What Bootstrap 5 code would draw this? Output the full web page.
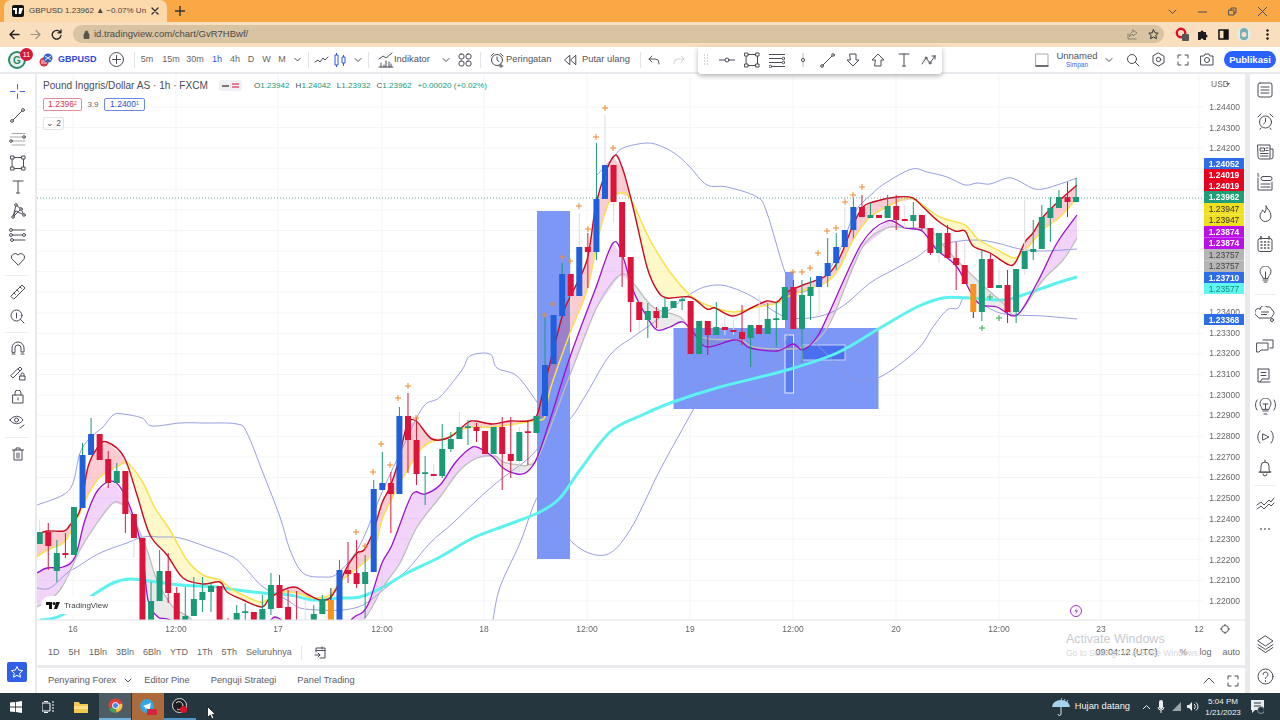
<!DOCTYPE html>
<html lang="en">
<head>
<meta charset="UTF-8">
<title>GBPUSD 1.23962</title>
<link href="https://cdn.jsdelivr.net/npm/bootstrap@5.3.0/dist/css/bootstrap.min.css" rel="stylesheet">
<style>
html,body{height:720px;overflow:hidden}
body{font-family:"Liberation Sans",Arial,sans-serif;font-size:10px;color:#4a4a4a;background:#fff}
svg{display:block;flex:none}
.ico{fill:none;stroke:#4a4d56;stroke-width:1;stroke-linecap:round;stroke-linejoin:round}
/* browser */
.tabstrip{height:22px;background:#f9a845;flex:none}
.btab{width:163px;height:22px;margin-left:4px;background:#fbd9ab;border-radius:7px 7px 0 0;padding:0 8px;font-size:8px;color:#444;gap:5px}
.btab-title{width:120px;white-space:nowrap;overflow:hidden}
.fav{width:12px;height:12px;background:#111;border-radius:2px;flex:none}
.winbtns{margin-left:auto;gap:21px;padding-right:13px}
.addrbar{height:25px;background:#f9dfbd;padding:0 0 1px 0;flex:none}
.omni{width:1091px;height:18px;background:#d8c3a3;border-radius:9px;padding:0 5px 0 10px;font-size:9.5px;color:#4c4a45;margin-left:6px;flex:none}
.nav-ico{width:21px}
.ext{width:20.5px;flex:none}
/* tv toolbar */
.tvbar{height:27px;background:#fff;flex:none;border-bottom:2px solid #e9eaee;font-size:9.4px;color:#50535e;white-space:nowrap}
.avatar{width:34px;height:25px}
.bdg{top:1px;left:20px;width:13px;height:13px;border-radius:50%;background:#d9173a;color:#fff;font-size:7px;line-height:13px;text-align:center}
.tick{color:#2b48d8;font-weight:700;font-size:9px;width:36px}
.vsep{width:1px;height:16px;background:#e4e5ea;flex:none}
.iv{text-align:center;font-size:9px;color:#666;flex:none}
.on{color:#2b58e8}
.w15{width:15px}.w16{width:16px}.w20{width:20px}.w24{width:24px}.w38{width:38px}.w46{width:46px}.w48{width:48px}
.m1{margin-left:1px}.m2{margin-left:2px}.m3{margin-left:3px}.m4{margin-left:4px}.m5{margin-left:5px}.m6{margin-left:6px}.m7{margin-left:7px}.m8{margin-left:8px}.m9{margin-left:9px}.m10{margin-left:10px}.m11{margin-left:11px}.m12{margin-left:12px}.m15{margin-left:15px}
.drawbar{width:244px;height:27px;background:#fff;box-shadow:0 2px 5px rgba(0,0,0,.3);border-radius:0 0 3px 3px;padding:0 0 0 5px;z-index:3;margin-top:1px;flex:none}
.dcell{width:25.3px;flex:none}
.layoutname{width:44px;line-height:1;text-align:center;color:#50535e;font-size:9.5px}
.layoutname small{display:block;font-size:6.5px;color:#2f6ce8;margin-top:1px}
.rightgrp{margin-left:auto;padding-right:4px}
.pub{width:52px;height:17px;background:#2962ff;border-radius:9px;color:#fff;font-weight:700;font-size:9.5px;line-height:17px;text-align:center}
/* main */
.mainrow{height:619px;flex:none}
.ltools{width:37px;border-right:2px solid #e9eaee;padding-top:5px;flex:none}
.lcell{width:35px;height:24px}
.lsep{width:24px;height:1px;background:#eceef2;margin:4px 5px}
.star{width:20px;height:20px;background:#2f5fe8;margin:auto 0 11px 7px;border-radius:2px}
.center{width:1208px;flex:none}
.chartbox{height:566px}
#chart{filter:blur(.3px)}
.legend{top:4px;left:6px;color:#50535e;z-index:2}
.leg-title{font-size:10.1px;width:170px;color:#4a4d58;white-space:nowrap}
.leg-mini{width:23px;height:11px;background:#eef0f3;border-radius:3px;margin-left:6px;gap:3px}
.ohlc{margin-left:12px;font-size:8.1px;gap:6px;color:#1b9a77;white-space:nowrap}
.ohlc b{font-weight:400;color:#555}
.legrow2{margin-top:5px}
.legrow3{margin-top:6px}
.pill{height:13px;border-radius:2px;font-size:8.5px;line-height:11px;text-align:center;white-space:nowrap}
.p-red{width:39px;border:1px solid #e58b98;color:#d5384d}
.p-blue{width:41px;border:1px solid #6f86ea;color:#2c52d8}
.p-n{width:21px;border:1px solid #e2e3e8;color:#555}
.spr{width:22px;text-align:center;font-size:8px;color:#666}
.rangebar{height:25px;font-size:9px;color:#666;padding:0 5px 0 11px;gap:9px;white-space:nowrap}
.watermark{left:1029px;top:-7px;color:#c9cbd1;z-index:2;pointer-events:none;line-height:1;white-space:nowrap}
.wm1{font-size:12.5px}
.wm2{font-size:8.5px;margin-top:3px;color:#d6d8dc}
.rsep{width:1px;height:14px;background:#e4e5ea}
.utc{color:#555;margin-right:13px}
.hsep{height:3px;background:#e9eaee}
.bottabs{height:25px;padding:0 6px 0 11px;font-size:9.3px;color:#5a5d68;gap:21px;white-space:nowrap}
.tab0{margin-right:-9px}
.tabfull{margin-left:-9px}
.rtools{width:35px;border-left:5px solid #e9eaee;flex:none;padding-top:1px}
.rcell{height:30.7px}
.rcell-s{height:20px}
.rsepx{width:22px;height:1px;background:#eceef2;margin:2px 4px}
.rbot{margin-top:auto}
.rbot .rcell{height:33px}
/* taskbar */
.taskbar{height:27px;background:#25363e;color:#f0f2f3;flex:none;font-size:9.3px}
.tcell{width:32px;height:27px;flex:none}
.t-act{background:#4e5c63;border-bottom:2px solid #6fb4e0}
.t-flash{background:#ad6a3a}
.t-un{border-bottom:2px solid #4f95c5}
.clock{font-size:8px;line-height:11px;text-align:center;width:46px}
.cursor{left:207px;top:13px}
</style>
</head>
<body class="d-flex flex-column">

<div class="tabstrip d-flex align-items-center">
  <div class="btab d-flex align-items-center">
    <span class="fav d-flex align-items-center justify-content-center">
      <svg width="10" height="6" viewBox="0 0 10 6"><path d="M0 0h4v6H2V2H0zM6 0h4L8 6H5.600z" fill="#fff"/></svg>
    </span>
    <span class="btab-title">GBPUSD 1.23962 ▲ −0.07% Unr</span>
    <svg class="ico" width="8" height="8" viewBox="0 0 8 8"><path d="M1 1l6 6M7 1L1 7" stroke="#333" stroke-width="1.400"/></svg>
  </div>
  <svg class="ico ms-2" width="10" height="10" viewBox="0 0 10 10"><path d="M5 0v10M0 5h10" stroke="#333" stroke-width="1.400"/></svg>
  <div class="winbtns d-flex align-items-center">
    <svg class="ico" width="9" height="9" viewBox="0 0 9 9"><path d="M1 3l3.500 3.500L8 3"/></svg>
    <svg class="ico" width="9" height="9" viewBox="0 0 9 9"><path d="M0 5h9"/></svg>
    <svg class="ico" width="9" height="9" viewBox="0 0 9 9"><path d="M1 3h5v5H1zM3 3V1h5v5H6"/></svg>
    <svg class="ico" width="9" height="9" viewBox="0 0 9 9"><path d="M0 0l9 9M9 0L0 9"/></svg>
  </div>
</div>

<div class="addrbar d-flex align-items-center">
  <span class="nav-ico d-flex justify-content-center ms-1"><svg class="ico" width="11" height="11" viewBox="0 0 11 11"><path d="M10 5.500H1M5 1.500l-4 4 4 4" stroke="#222" stroke-width="1.400"/></svg></span>
  <span class="nav-ico d-flex justify-content-center"><svg class="ico" width="11" height="11" viewBox="0 0 11 11"><path d="M1 5.500h9M6 1.500l4 4-4 4" stroke="#9b927f" stroke-width="1.200"/></svg></span>
  <span class="nav-ico d-flex justify-content-center"><svg class="ico" width="11" height="11" viewBox="0 0 11 11"><path d="M9.500 3.600A4.400 4.400 0 1 0 10 6.500M10 .8v3H7" stroke="#222" stroke-width="1.300"/></svg></span>
  <div class="omni d-flex align-items-center">
    <svg width="7" height="9" viewBox="0 0 7 9"><path d="M1 4h5v4.500H1zM2 4V2.400a1.500 1.500 0 0 1 3 0V4" fill="#5a5347" stroke="#5a5347" stroke-width=".8"/></svg>
    <span class="ms-1">id.tradingview.com/chart/GvR7HBwf/</span>
    <svg class="ico ms-auto" width="11" height="11" viewBox="0 0 11 11"><path d="M1 5v5h8M6 1l4 3-4 3V5.400C4 5.400 3 6.400 2.500 8 2.500 5 4 2.800 6 2.600z" stroke="#8a8272"/></svg>
    <svg class="ico m10" width="11" height="11" viewBox="0 0 11 11"><path d="M5.500.8l1.500 3 3.200.4-2.400 2.200.700 3.300-3-1.700-3 1.700.700-3.300L.8 4.200 4 3.800z" stroke="#333"/></svg>
  </div>
  <span class="ext d-flex justify-content-center ms-2"><svg width="14" height="14" viewBox="0 0 14 14"><circle cx="6" cy="6" r="4.200" fill="none" stroke="#e00d25" stroke-width="2.400"/><rect x="7" y="7" width="7" height="7" rx="1" fill="#555"/></svg></span>
  <span class="ext d-flex justify-content-center"><svg width="11" height="11" viewBox="0 0 11 11"><path d="M1 3h2.500a1.500 1.500 0 0 1 3 0H9v2.500a1.500 1.500 0 0 1 0 3V11H6.500a1.500 1.500 0 0 0-3 0H1z" fill="#1c1c1c"/></svg></span>
  <span class="ext d-flex justify-content-center"><svg width="11" height="11" viewBox="0 0 11 11"><path d="M1 1h9v9H1z" fill="none" stroke="#111" stroke-width="1.500"/><path d="M5.500 1H10v9H5.500z" fill="#111"/></svg></span>
  <span class="ext d-flex justify-content-center"><svg width="14" height="14" viewBox="0 0 14 14"><circle cx="7" cy="7" r="7" fill="#dfeee9"/><path d="M3 5a4 4 0 0 1 8 0v6l-2 2H5l-2-2z" fill="#79aeb5"/><circle cx="7" cy="7.500" r="2.500" fill="#f4dfd1"/></svg></span>
  <span class="ext d-flex justify-content-center m3"><svg width="3" height="11" viewBox="0 0 3 11"><circle cx="1.500" cy="1.500" r="1.200" fill="#111"/><circle cx="1.500" cy="5.500" r="1.200" fill="#111"/><circle cx="1.500" cy="9.500" r="1.200" fill="#111"/></svg></span>
</div>

<div class="tvbar d-flex align-items-center">
  <div class="avatar position-relative d-flex align-items-center justify-content-center">
    <svg width="18" height="18" viewBox="0 0 18 18"><circle cx="9" cy="9" r="8" fill="#e8f1ec" stroke="#2d8a68" stroke-width="2"/><text x="9" y="12.500" text-anchor="middle" font-size="10" font-weight="700" fill="#2d8a68" font-family="Liberation Sans">G</text></svg>
    <span class="bdg position-absolute">11</span>
  </div>
  <svg class="m5" width="14" height="14" viewBox="0 0 14 14"><circle cx="5" cy="9" r="4.500" fill="#d8394e"/><path d="M2 8h7M2 10h6" stroke="#fff" stroke-width=".8"/><circle cx="9" cy="5" r="4.500" fill="#3b62c9"/><path d="M6 3l6 4M12 3L6 7" stroke="#fff" stroke-width=".9"/></svg>
  <span class="tick m5">GBPUSD</span>
  <svg class="ico m15" width="15" height="15" viewBox="0 0 15 15"><circle cx="7.500" cy="7.500" r="7"/><path d="M7.500 3.500v8M3.500 7.500h8"/></svg>
  <span class="vsep m10"></span>
  <span class="iv w24">5m</span><span class="iv w24">15m</span><span class="iv w24">30m</span><span class="iv w20 on">1h</span><span class="iv w16">4h</span><span class="iv w16">D</span><span class="iv w15">W</span><span class="iv w16">M</span>
  <span class="w15 d-flex justify-content-center"><svg class="ico" width="7" height="5" viewBox="0 0 7 5"><path d="M.5 1l3 3 3-3"/></svg></span>
  <span class="vsep m3"></span>
  <svg class="ico m5" width="15" height="14" viewBox="0 0 15 14"><path d="M1 9l3-2 2 2 3-4 2 2 3-3"/></svg>
  <svg class="m4" width="14" height="16" viewBox="0 0 14 16" fill="none" stroke="#2b58e8"><path d="M2 3h3v10H2zM3.500 1v2M3.500 13v2M9 5h3v6H9zM10.500 3v2M10.500 11v3"/></svg>
  <svg class="ico m6" width="10" height="6" viewBox="0 0 10 6"><path d="M2 1.500l3 3 3-3"/></svg>
  <span class="vsep m5"></span>
  <svg class="ico m9" width="16" height="16" viewBox="0 0 16 16"><path d="M1 15h14M3 15v-4M8 15V9M13 15v-3M6 15v-2M11 15v-5M1 7l4-3 3 2 6-5"/></svg>
  <span class="w38">Indikator</span>
  <svg class="ico m9" width="10" height="6" viewBox="0 0 10 6"><path d="M2 1.500l3 3 3-3"/></svg>
  <svg class="ico m7" width="14" height="14" viewBox="0 0 14 14"><rect x="1" y="1" width="5" height="5" rx="2"/><rect x="8" y="1" width="5" height="5" rx="2"/><rect x="1" y="8" width="5" height="5" rx="2"/><rect x="8" y="8" width="5" height="5" rx="2"/></svg>
  <span class="vsep m8"></span>
  <svg class="ico m8" width="16" height="16" viewBox="0 0 16 16"><circle cx="8" cy="8" r="5.500"/><path d="M8 5v3l2 1.500M2 4l2.500-2.500M14 4l-2.500-2.500M12 12v3.500M10 14h4"/></svg>
  <span class="w46 m1">Peringatan</span>
  <svg class="ico m11" width="14" height="14" viewBox="0 0 14 14"><path d="M6.500 2.500L1.500 7l5 4.500zM12.500 2.500L7.500 7l5 4.500z"/></svg>
  <span class="w48 m5">Putar ulang</span>
  <span class="vsep m10"></span>
  <svg class="ico m6" width="14" height="12" viewBox="0 0 14 12"><path d="M5 2L2 5l3 3M2 5h6a4 4 0 0 1 4 4v1" stroke="#555"/></svg>
  <svg class="ico m11" width="14" height="12" viewBox="0 0 14 12"><path d="M9 2l3 3-3 3M12 5H6a4 4 0 0 0-4 4v1" stroke="#cfd1d6"/></svg>
  <div class="drawbar d-flex align-items-center m12">
    <svg width="6" height="12" viewBox="0 0 6 12"><path d="M1 1h1M4 1h1M1 4h1M4 4h1M1 7h1M4 7h1M1 10h1M4 10h1" stroke="#aaa"/></svg>
    <span class="dcell d-flex justify-content-center m5"><svg class="ico" width="16" height="6" viewBox="0 0 16 6"><path d="M0 3h6M10 3h6"/><circle cx="8" cy="3" r="2"/></svg></span>
    <span class="dcell d-flex justify-content-center"><svg class="ico" width="16" height="16" viewBox="0 0 16 16"><path d="M2.500 2.500h11v11h-11z"/><rect x="1" y="1" width="3" height="3" fill="#fff"/><rect x="12" y="1" width="3" height="3" fill="#fff"/><rect x="1" y="12" width="3" height="3" fill="#fff"/><rect x="12" y="12" width="3" height="3" fill="#fff"/></svg></span>
    <span class="dcell d-flex justify-content-center"><svg class="ico" width="16" height="15" viewBox="0 0 16 15"><path d="M0 1.500h16M0 5.500h13M0 9.500h13M3 13.500h13"/><circle cx="14.500" cy="5.500" r="1.300" fill="#fff"/><circle cx="14.500" cy="9.500" r="1.300" fill="#fff"/><circle cx="1.500" cy="13.500" r="1.300" fill="#fff"/></svg></span>
    <span class="dcell d-flex justify-content-center"><svg class="ico" width="4" height="14" viewBox="0 0 4 14"><path d="M2 0v5M2 9v5" stroke="#bbb"/><circle cx="2" cy="7" r="1.600"/></svg></span>
    <span class="dcell d-flex justify-content-center"><svg class="ico" width="15" height="15" viewBox="0 0 15 15"><path d="M2.500 12.500l10-10"/><circle cx="2" cy="13" r="1.300" fill="#fff"/><circle cx="13" cy="2" r="1.300" fill="#fff"/></svg></span>
    <span class="dcell d-flex justify-content-center"><svg class="ico" width="14" height="14" viewBox="0 0 14 14"><path d="M4 1h6v6h3l-6 6-6-6h3z"/></svg></span>
    <span class="dcell d-flex justify-content-center"><svg class="ico" width="14" height="14" viewBox="0 0 14 14"><path d="M4 13h6V7h3L7 1 1 7h3z"/></svg></span>
    <span class="dcell d-flex justify-content-center"><svg class="ico" width="12" height="14" viewBox="0 0 12 14"><path d="M1 1h10M6 1v12M4.500 13h3"/></svg></span>
    <span class="dcell d-flex justify-content-center"><svg class="ico" width="17" height="12" viewBox="0 0 17 12"><path d="M1 10l4-6 4 5 5-7M14 2h-3M14 2v3"/><circle cx="5" cy="4" r="1" fill="#fff"/><circle cx="9" cy="9" r="1" fill="#fff"/></svg></span>
  </div>
  <div class="rightgrp d-flex align-items-center">
    <svg class="ico" width="14" height="14" viewBox="0 0 14 14"><path d="M1 1h12v12H1z" stroke="#aaa"/><path d="M1 13h12" stroke-width="1.400"/></svg>
    <span class="layoutname m6">Unnamed<small>Simpan</small></span>
    <svg class="ico m5" width="10" height="6" viewBox="0 0 10 6"><path d="M2 1.500l3 3 3-3"/></svg>
    <svg class="ico m12" width="14" height="14" viewBox="0 0 14 14"><circle cx="6" cy="6" r="4.500"/><path d="M9.500 9.500L13 13"/></svg>
    <svg class="ico m11" width="15" height="15" viewBox="0 0 15 15"><path d="M7.500 1l5.500 3.200v6.600L7.500 14 2 10.800V4.200z"/><circle cx="7.500" cy="7.500" r="2.200"/></svg>
    <svg class="ico m11" width="12" height="12" viewBox="0 0 12 12"><path d="M1 4V1h3M8 1h3v3M11 8v3H8M4 11H1V8"/></svg>
    <svg class="ico m11" width="14" height="13" viewBox="0 0 14 13"><path d="M1 3h3l1-2h4l1 2h3v9H1z"/><circle cx="7" cy="7" r="2.500"/></svg>
    <span class="pub m10">Publikasi</span>
  </div>
</div>

<div class="mainrow d-flex">
  <div class="ltools d-flex flex-column">
    <span class="lcell d-flex align-items-center justify-content-center"><svg class="ico" width="15" height="15" viewBox="0 0 15 15"><path d="M7.500 0v5M7.500 10v5M0 7.500h5M10 7.500h5" stroke="#4d6ad8"/></svg></span>
    <span class="lcell d-flex align-items-center justify-content-center"><svg class="ico" width="15" height="15" viewBox="0 0 15 15"><path d="M3 12l9-9"/><circle cx="2" cy="13" r="1.400" fill="#fff"/><circle cx="13" cy="2" r="1.400" fill="#fff"/></svg></span>
    <span class="lcell d-flex align-items-center justify-content-center"><svg class="ico" width="17" height="15" viewBox="0 0 17 15"><path d="M3 1.500h13M1 5h13M3 9h13M3 13h13" stroke="#aaa"/><circle cx="15" cy="5" r="1.300" fill="#fff"/><circle cx="2" cy="9" r="1.300" fill="#fff"/></svg></span>
    <span class="lcell d-flex align-items-center justify-content-center"><svg class="ico" width="16" height="16" viewBox="0 0 16 16"><path d="M2.500 2.500h11v11h-11z"/><rect x="1" y="1" width="3" height="3" fill="#fff"/><rect x="12" y="1" width="3" height="3" fill="#fff"/><rect x="1" y="12" width="3" height="3" fill="#fff"/><rect x="12" y="12" width="3" height="3" fill="#fff"/></svg></span>
    <span class="lcell d-flex align-items-center justify-content-center"><svg class="ico" width="12" height="14" viewBox="0 0 12 14"><path d="M1 1h10M6 1v12M4.500 13h3"/></svg></span>
    <span class="lcell d-flex align-items-center justify-content-center"><svg class="ico" width="16" height="16" viewBox="0 0 16 16"><path d="M3 14L6 2l5 4 3 6-8-4zM3 14l8-8"/><circle cx="3" cy="14" r="1.300" fill="#fff"/><circle cx="6" cy="2" r="1.300" fill="#fff"/><circle cx="11" cy="6" r="1.300" fill="#fff"/><circle cx="14" cy="12" r="1.300" fill="#fff"/></svg></span>
    <span class="lcell d-flex align-items-center justify-content-center"><svg class="ico" width="17" height="14" viewBox="0 0 17 14"><path d="M3 2h13M3 7h11M5 12h11"/><circle cx="2" cy="2" r="1.500" fill="#fff"/><circle cx="2" cy="7" r="1.500" fill="#fff"/><circle cx="3" cy="12" r="1.500" fill="#fff"/><circle cx="15" cy="7" r="1.500" fill="#fff"/></svg></span>
    <span class="lcell d-flex align-items-center justify-content-center"><svg class="ico" width="16" height="14" viewBox="0 0 16 14"><path d="M8 13L1.600 6.500A3.700 3.700 0 0 1 8 3a3.700 3.700 0 0 1 6.400 3.500z"/></svg></span>
    <span class="lsep"></span>
    <span class="lcell d-flex align-items-center justify-content-center"><svg class="ico" width="16" height="16" viewBox="0 0 16 16"><path d="M1 12L12 1l3 3L4 15zM4 9l1.500 1.500M7 6l1.500 1.500M10 3l1.500 1.500"/></svg></span>
    <span class="lcell d-flex align-items-center justify-content-center"><svg class="ico" width="15" height="15" viewBox="0 0 15 15"><circle cx="6.500" cy="6.500" r="5.500"/><path d="M6.500 4v5M10.500 10.500L14 14"/></svg></span>
    <span class="lsep"></span>
    <span class="lcell d-flex align-items-center justify-content-center"><svg class="ico" width="14" height="16" viewBox="0 0 14 16"><path d="M1 11V7a6 6 0 0 1 12 0v4h-3V7a3 3 0 0 0-6 0v4zM1 13h3M10 13h3"/></svg></span>
    <span class="lcell d-flex align-items-center justify-content-center"><svg class="ico" width="16" height="16" viewBox="0 0 16 16"><path d="M1 11l2 2 7-7-2-2zM8 4l2-2 2 2-2 2"/><rect x="10" y="11" width="5" height="4"/><path d="M11 11V9.500a1.500 1.500 0 0 1 3 0V11"/></svg></span>
    <span class="lcell d-flex align-items-center justify-content-center"><svg class="ico" width="12" height="14" viewBox="0 0 12 14"><rect x="1" y="5" width="10" height="8"/><path d="M3 5V3a3 3 0 0 1 6 0v2M6 8v2"/></svg></span>
    <span class="lcell d-flex align-items-center justify-content-center"><svg class="ico" width="17" height="15" viewBox="0 0 17 15"><path d="M1 6c3-5 10-5 13 0-3 5-10 5-13 0z"/><circle cx="7.500" cy="6" r="2"/><path d="M11 14l4-3"/></svg></span>
    <span class="lsep"></span>
    <span class="lcell d-flex align-items-center justify-content-center"><svg class="ico" width="12" height="14" viewBox="0 0 12 14"><path d="M0 3h12M4 3V1h4v2M2 3v10h8V3M5 6v5M7 6v5"/></svg></span>
    <span class="star d-flex align-items-center justify-content-center"><svg width="14" height="14" viewBox="0 0 14 14"><path d="M7 1.500l1.700 3.600 3.900.5-2.900 2.700.8 3.900L7 10.300l-3.500 1.900.8-3.900L1.400 5.600l3.900-.5z" fill="none" stroke="#fff"/></svg></span>
  </div>

  <div class="center d-flex flex-column">
    <div class="chartbox position-relative">
      <div class="legend position-absolute">
        <div class="d-flex align-items-center">
          <span class="leg-title">Pound Inggris/Dollar AS · 1h · FXCM</span>
          <span class="leg-mini d-flex align-items-center justify-content-center">
            <svg width="7" height="2" viewBox="0 0 7 2"><path d="M0 1h7" stroke="#777" stroke-width="2"/></svg>
            <svg width="7" height="5" viewBox="0 0 7 5"><path d="M0 1h7M0 4h7" stroke="#e2557a" stroke-width="1.300"/></svg>
          </span>
          <span class="ohlc d-flex"><span><b>O</b>1.23942</span><span><b>H</b>1.24042</span><span><b>L</b>1.23932</span><span><b>C</b>1.23962</span><span>+0.00020 (+0.02%)</span></span>
        </div>
        <div class="d-flex align-items-center legrow2">
          <span class="pill p-red">1.2396²</span>
          <span class="spr">3.9</span>
          <span class="pill p-blue">1.2400¹</span>
        </div>
        <div class="d-flex legrow3">
          <span class="pill p-n">⌄ 2</span>
        </div>
      </div>
      <svg id="chart" width="1208" height="566" viewBox="37 74 1208 566"></svg>
    </div>
    <div class="rangebar d-flex align-items-center position-relative">
      <span>1D</span><span>5H</span><span>1Bln</span><span>3Bln</span><span>6Bln</span><span>YTD</span><span>1Th</span><span>5Th</span><span>Seluruhnya</span>
      <span class="rsep"></span>
      <svg class="ico m3" width="13" height="13" viewBox="0 0 13 13"><path d="M2 6V2h9v10H6M2 4.500h9M1 9h5M4 7l2 2-2 2M8 1v2"/></svg>
      <span class="utc ms-auto">09:04:12 (UTC)</span><span>%</span><span class="m3">log</span><span class="m2">auto</span>
      <div class="watermark position-absolute"><div class="wm1">Activate Windows</div><div class="wm2">Go to Settings to activate Windows.</div></div>
    </div>
    <div class="hsep"></div>
    <div class="bottabs d-flex align-items-center">
      <span class="tab0 d-flex align-items-center gap-2">Penyaring Forex <svg class="ico" width="8" height="5" viewBox="0 0 8 5"><path d="M1 1l3 3 3-3"/></svg></span>
      <span>Editor Pine</span><span>Penguji Strategi</span><span>Panel Trading</span>
      <svg class="ico ms-auto" width="12" height="7" viewBox="0 0 12 7"><path d="M1 6l5-5 5 5"/></svg>
      <svg class="ico tabfull" width="12" height="12" viewBox="0 0 12 12"><path d="M1 4V1h3M8 1h3v3M11 8v3H8M4 11H1V8"/></svg>
    </div>
  </div>

  <div class="rtools d-flex flex-column">
    <span class="rcell d-flex align-items-center justify-content-center"><svg class="ico" width="16" height="16" viewBox="0 0 16 16"><rect x="1" y="1" width="14" height="14" rx="2"/><path d="M4 5h8M4 8h8M4 11h8"/></svg></span>
    <span class="rcell d-flex align-items-center justify-content-center"><svg class="ico" width="17" height="17" viewBox="0 0 17 17"><circle cx="8.500" cy="9" r="6"/><path d="M8.500 5.500V9l-2 2M1 4l3-3M16 4l-3-3M4 15l-1 1.500M13 15l1 1.500"/></svg></span>
    <span class="rcell d-flex align-items-center justify-content-center"><svg class="ico" width="17" height="16" viewBox="0 0 17 16"><path d="M1 1h12v14H3a2 2 0 0 1-2-2zM13 5h3v8a2 2 0 0 1-2 2M3.500 4h4v3h-4zM9 4h2M9 6.500h2M3.500 9.500h7.500M3.500 12h7.500"/></svg></span>
    <span class="rcell d-flex align-items-center justify-content-center"><svg class="ico" width="16" height="18" viewBox="0 0 16 18"><path d="M1 0v2M1 5v12h14V9M1 3h1"/><rect x="4" y="3.500" width="11" height="4" rx="2"/><path d="M4 11h9M4 14h9"/></svg></span>
    <span class="rcell d-flex align-items-center justify-content-center"><svg class="ico" width="15" height="17" viewBox="0 0 15 17"><path d="M8 1c1 3 5 5 5 10a5.500 5.500 0 0 1-11 0c0-3 2-3.500 2.500-6C6 6 6.500 7 6.500 8 8 6 8.500 3.500 8 1z"/></svg></span>
    <span class="rcell d-flex align-items-center justify-content-center"><svg class="ico" width="16" height="16" viewBox="0 0 16 16"><rect x="1" y="2.500" width="14" height="13" rx="2"/><path d="M4 0v3M12 0v3M4 6h1M7.500 6h1M11 6h1M4 9h1M7.500 9h1M11 9h1M4 12h1M7.500 12h1M11 12h1" stroke-width="1.400"/></svg></span>
    <span class="rcell d-flex align-items-center justify-content-center"><svg class="ico" width="13" height="17" viewBox="0 0 13 17"><path d="M4 12c0-2-3-3-3-6.500a5.500 5.500 0 0 1 11 0C12 9 9 10 9 12zM4 14h5M5 16h3M6.500 6v6"/></svg></span>
    <span class="rsepx my-1"></span>
    <span class="rcell d-flex align-items-center justify-content-center"><svg class="ico" width="21" height="16" viewBox="0 0 21 16"><path d="M5 3a4 4 0 0 1 7-2 4 4 0 0 1 5 3 3 3 0 0 1 1 5 4 4 0 0 1-5 3H7a4 4 0 0 1-5-2 3 3 0 0 1 3-7zM6.500 6h7M6.500 8.500h5"/><circle cx="17" cy="14" r="1.500"/></svg></span>
    <span class="rcell d-flex align-items-center justify-content-center"><svg class="ico" width="18" height="16" viewBox="0 0 18 16"><path d="M7 3h10v8h-3M1 6h11v7H5l-2 2H1z"/></svg></span>
    <span class="rcell d-flex align-items-center justify-content-center"><svg class="ico" width="18" height="16" viewBox="0 0 18 16"><path d="M2 1h11v10H6l-2 3h10M2 1v13h2M5 4.500h5M5 7.500h5"/></svg></span>
    <span class="rcell d-flex align-items-center justify-content-center"><svg class="ico" width="21" height="17" viewBox="0 0 21 17"><path d="M7 11c0-2-2-3-2-5.500a5.500 5.500 0 0 1 11 0C16 8 14 9 14 11zM8 13h5M9 16h3M8 6h5M10.500 6v5M2 2C0 5 0 9 2 12M19 2c2 3 2 7 0 10"/></svg></span>
    <span class="rcell d-flex align-items-center justify-content-center"><svg class="ico" width="19" height="16" viewBox="0 0 19 16"><path d="M4 2C1 5 1 11 4 14M15 2c3 3 3 9 0 12M7 5l6 3-6 3z"/></svg></span>
    <span class="rcell d-flex align-items-center justify-content-center"><svg class="ico" width="14" height="18" viewBox="0 0 14 18"><path d="M2 13c1-1 1-3 1-6a4 4 0 0 1 8 0c0 3 0 5 1 6zM1 13h12M5 15a2 2 0 0 0 4 0M7 1v2"/></svg></span>
    <span class="rsepx"></span>
    <span class="rcell d-flex align-items-center justify-content-center"><svg class="ico" width="19" height="13" viewBox="0 0 19 13"><path d="M1 8l4-3 3 3 5-5 2 2 3-4M1 12l4-3 3 3 5-5 2 2 3-3"/></svg></span>
    <span class="rcell-s d-flex align-items-center justify-content-center"><svg width="10" height="2" viewBox="0 0 10 2"><path d="M0 1h2M4 1h2M8 1h2" stroke="#777" stroke-width="1.500"/></svg></span>
    <div class="rbot">
      <span class="rcell d-flex align-items-center justify-content-center"><svg class="ico" width="17" height="18" viewBox="0 0 17 18"><path d="M8.500 1l7.500 5-7.500 5L1 6zM1 9.500l7.500 5 7.500-5M1 12.500l7.500 5 7.500-5"/></svg></span>
      <span class="rcell d-flex align-items-center justify-content-center"><svg class="ico" width="17" height="17" viewBox="0 0 17 17"><circle cx="8.500" cy="8.500" r="7.500"/><path d="M6 6.500a2.500 2.500 0 1 1 3.500 2.300c-.7.400-1 .8-1 1.700M8.500 12.500v1"/></svg></span>
    </div>
  </div>
</div>

<div class="taskbar d-flex align-items-center position-relative">
  <span class="d-flex align-items-center justify-content-center tcell"><svg width="12" height="12" viewBox="0 0 12 12"><path d="M0 1.600L5 1v4.600H0zM5.800.9L12 0v5.600H5.800zM0 6.400h5v4.700l-5-.7zM5.800 6.400H12V12l-6.200-.9z" fill="#fff"/></svg></span>
  <span class="d-flex align-items-center justify-content-center tcell"><svg width="12" height="12" viewBox="0 0 12 12"><path d="M0 2h8v8H0zM2 .5h4M2 11.500h4M10 1h2M10 4h2M10 7h2M10 10h2" fill="none" stroke="#fff"/></svg></span>
  <span class="d-flex align-items-center justify-content-center tcell m1"><svg width="14" height="12" viewBox="0 0 14 12"><path d="M0 1h5l1 2h8v9H0z" fill="#f3c84c"/><path d="M0 5h14v3H0z" fill="#fbe08a"/></svg></span>
  <span class="d-flex align-items-center justify-content-center tcell t-act m2"><svg width="15" height="15" viewBox="0 0 15 15"><circle cx="7.500" cy="7.500" r="7" fill="#d9403a"/><path d="M7.500 7.500L1 11a7 7 0 0 0 7.500 3.500z" fill="#3ba55d"/><path d="M7.500 7.500l6.500-2A7 7 0 0 1 8.500 14.500z" fill="#f4c63c"/><circle cx="7.500" cy="7.500" r="3" fill="#4285f4" stroke="#fff"/></svg></span>
  <span class="d-flex align-items-center justify-content-center tcell t-flash position-relative m1"><svg width="17" height="16" viewBox="0 0 17 16"><circle cx="7" cy="7" r="7" fill="#35a7e0"/><path d="M3 7l8-3-1.500 7-2.500-2-1.500 1.500V8.500z" fill="#fff"/><rect x="7" y="10" width="10" height="6" rx="1.500" fill="#d9233c"/></svg></span>
  <span class="d-flex align-items-center justify-content-center tcell t-un"><svg width="16" height="16" viewBox="0 0 16 16"><circle cx="7.500" cy="7.500" r="7" fill="#1c1c1c" stroke="#ddd"/><path d="M4 5a4 4 0 0 1 7 3M5 11a3.500 3.500 0 0 0 5-1" fill="none" stroke="#ddd"/><circle cx="11.500" cy="11.500" r="3.500" fill="#e0102a"/></svg></span>
  <svg class="cursor position-absolute" width="9" height="14" viewBox="0 0 9 14"><path d="M.5.500v11l2.800-2.500L5 13l2-1-1.700-3.600H8.500z" fill="#fff" stroke="#111" stroke-width=".8"/></svg>
  <div class="ms-auto d-flex align-items-center">
    <svg width="20" height="20" viewBox="0 0 20 20"><path d="M1 10a9 7 0 0 1 18 0z" fill="#a6d3ee"/><path d="M10 10v7a1.500 1.500 0 0 1-3 0" fill="none" stroke="#cfe5f2"/><path d="M14 2l-1 2M17 3l-1 2M11 1l-1 2" stroke="#8fc3e6"/></svg>
    <span class="m4">Hujan datang</span>
    <svg class="m12" width="9" height="6" viewBox="0 0 9 6"><path d="M1 5l3.500-3.500L8 5" fill="none" stroke="#eee"/></svg>
    <svg class="m6" width="8" height="14" viewBox="0 0 8 14"><rect x="2" y="0" width="4" height="9" rx="2" fill="#eee"/><path d="M1 7a3 3 0 0 0 6 0M4 10v3" stroke="#eee" fill="none"/></svg>
    <svg class="m6" width="11" height="11" viewBox="0 0 11 11"><path d="M1 10L10 1v9z" fill="#9aa5aa"/></svg>
    <svg class="m5" width="12" height="11" viewBox="0 0 12 11"><path d="M0 4h2l3-3v9L2 7H0z" fill="#eee"/><path d="M7 3a3 3 0 0 1 0 5M9 1.500a5 5 0 0 1 0 8" fill="none" stroke="#eee"/></svg>
    <div class="clock m1"><div>5:04 PM</div><div>1/21/2023</div></div>
    <svg class="m5 me-3" width="13" height="14" viewBox="0 0 13 14"><path d="M0 0h13v10H4l-3 3v-3H0z" fill="#e8ecee"/><path d="M3 3h7M3 6h7" stroke="#25363e"/><circle cx="10" cy="10" r="3.500" fill="#25363e" stroke="#ddd" stroke-width=".6"/></svg>
  </div>
</div>

<script src="https://cdn.jsdelivr.net/npm/bootstrap@5.3.0/dist/js/bootstrap.bundle.min.js"></script>
<script>
// colours of the candles and lines, read off the picture
const COL = { g: "#1b9a77", r: "#dc143c", b: "#1f5fdc", o: "#f7931e" };

// [colour, body top, body bottom, wick top, wick bottom, pale wick?], one per hour, page pixels
const candles = [
  ["g",532,544,520,546,1],["r",532,546,523,570],["g",553,571,540,582],["r",553,555,533,558],
  ["g",507,555,507,555],["b",455,508,443,508],["b",434,455,418,455],["r",434,460,434,460],
  ["r",459,483,451,488],["g",471,483,463,483],["r",471,514,471,533],["r",514,538,514,558,1],
  ["r",538,625,538,625],["g",601,625,582,625],["g",571,601,550,601],["r",571,593,553,603],
  ["r",593,625,587,625],["g",616,625,587,625],["g",599,616,577,616],["g",592,600,577,612],
  ["g",586,592,582,612],["r",586,625,586,625],["r",625,625,618,625],["g",613,625,605,625],
  ["g",612,613,603,620],["r",612,625,612,625],["g",609,625,595,625],["g",585,609,573,615],
  ["r",585,608,575,608],["r",607,625,590,625],["r",625,625,591,625],["g",625,625,600,625,1],
  ["g",614,625,605,625],["g",599,614,595,614],["o",600,625,588,625],["b",570,625,560,625],
  ["r",570,574,542,583],["r",573,584,540,588],["g",572,584,555,618],["b",489,572,480,572],
  ["b",483,490,452,490],["r",483,494,472,533],["b",416,494,407,494],["r",416,440,393,473],
  ["r",440,474,417,485],["g",473,474,456,505],["r",474,476,464,480,1],["g",449,476,424,478],
  ["g",439,449,432,452],["g",427,439,412,439,1],["g",427,428,420,445],["r",427,431,423,442],
  ["r",431,454,431,454],["g",427,454,427,454],["r",427,454,417,490],["r",454,461,417,478],
  ["g",432,461,427,472,1],["r",432,433,420,465],["g",416,433,416,433],["b",365,416,317,416],
  ["b",315,364,315,364],["b",274,316,263,316],["r",274,296,263,317,1],["b",247,296,213,296,1],
  ["r",247,252,233,288],["b",199,252,143,260],["b",165,199,115,199,1],["r",165,202,165,223,1],
  ["r",202,257,202,287],["r",257,302,257,332],["r",302,320,302,332,1],["g",311,320,303,338],
  ["r",311,318,307,328],["g",307,318,298,318],["g",301,308,301,308],["g",300,301,297,310],
  ["r",301,354,301,354],["g",321,354,321,354],["r",321,335,321,355],["g",327,335,302,335],
  ["r",327,330,315,335,1],["r",330,332,320,335,1],["r",332,339,305,345],["g",325,338,325,367],
  ["r",325,334,295,334,1],["g",319,334,303,334],["g",319,320,302,347],["g",287,320,287,320],
  ["r",287,329,280,329],["g",295,329,280,363],["g",287,296,277,320],["b",276,287,276,315,1],
  ["b",263,276,238,287],["b",247,263,233,270],["b",230,247,207,247,1],["b",207,230,198,238],
  ["r",207,217,195,217],["g",215,218,203,218],["r",215,218,215,218],["g",206,218,195,218],
  ["r",206,220,195,230],["r",219,221,205,228,1],["g",215,221,202,228],["r",215,228,215,231],
  ["r",228,253,228,255],["g",233,253,233,263,1],["r",233,258,225,258],["r",258,265,242,290],
  ["r",265,284,242,265,1],["o",284,312,284,318],["g",259,312,250,321],["r",259,288,253,288],
  ["g",285,288,270,288,1],["r",285,312,270,323],["g",269,312,269,323],["g",251,269,200,275,1],
  ["g",249,252,220,260],["g",217,249,205,249],["g",208,218,197,242],["g",197,208,190,208],
  ["r",197,202,182,217],["g",197,202,178,202]
];

const lines = {
  red: [37,535,47,531,64,531,70,525,80,510,88,467,98,447,107,442,124,457,137,495,150,535,167,555,183,578,203,584,220,582,227,592,243,600,262,607,271,597,293,587,307,594,320,600,330,598,340,582,347,567,357,553,364,550,373,532,382,503,390,487,398,463,407,425,416,421,432,439,450,437,467,423,475,421,492,424,510,421,527,421,537,415,545,383,562,317,570,297,587,260,597,200,613,157,622,167,633,207,647,267,657,290,667,298,690,297,707,309,715,308,733,316,753,307,767,301,777,302,787,292,803,285,827,275,840,257,853,225,863,207,873,202,897,197,913,198,923,207,938,221,955,231,965,231,973,246,990,253,1007,264,1015,263,1025,242,1033,233,1043,217,1060,200,1077,185],
  yellow: [37,557,47,550,63,543,73,528,87,497,100,477,120,465,128,463,143,483,155,508,170,530,187,560,203,575,220,580,233,590,260,602,271,597,283,592,297,593,313,598,330,595,340,582,370,557,377,540,383,517,400,483,420,450,433,441,447,438,460,430,473,427,493,427,527,422,537,420,545,417,550,390,570,333,587,290,600,230,610,200,620,193,630,198,650,240,670,272,690,295,707,305,733,312,753,308,777,303,787,297,810,288,827,282,840,267,853,240,870,217,897,202,913,199,940,217,965,225,978,239,1003,253,1015,258,1027,248,1043,230,1060,217,1077,198],
  purple: [37,573,47,568,63,567,75,557,85,520,98,490,115,482,130,507,142,550,148,600,158,617,170,620,200,640,262,625,275,617,290,625,330,640,353,618,363,612,370,600,382,563,392,545,408,503,415,492,425,494,440,485,455,463,468,450,477,447,493,457,503,468,517,474,527,472,537,458,550,420,570,357,595,290,613,243,623,257,633,290,647,317,657,330,670,327,683,322,697,337,707,347,733,340,742,342,750,348,777,351,793,344,803,350,817,337,830,311,862,243,887,221,905,228,922,231,937,250,957,267,977,302,997,307,1017,315,1037,283,1057,243,1077,215],
  gray: [37,607,60,590,80,550,97,523,113,503,123,505,133,517,147,550,157,580,173,607,190,618,210,640,340,640,365,618,383,587,400,563,417,527,440,497,460,470,477,458,495,456,503,462,520,465,528,465,540,453,573,367,597,307,620,275,633,283,653,307,680,317,693,333,710,339,740,340,753,347,777,349,800,348,817,340,833,317,862,248,887,228,905,228,930,230,947,250,977,280,1003,303,1017,315,1043,280,1063,260,1077,238],
  cyan: [40,620,60,616,93,595,113,583,130,579,157,582,180,585,217,587,237,590,263,593,290,595,313,600,340,598,360,597,383,587,407,573,440,557,473,538,507,525,540,512,560,498,580,470,610,432,640,416,673,402,720,387,787,370,837,353,880,328,917,307,943,298,970,298,1003,300,1023,295,1057,283,1077,277],
  bbUp: [37,505,63,495,73,483,80,453,90,438,103,427,113,415,123,414,142,418,152,426,180,423,203,423,237,424,247,433,263,473,280,517,290,550,303,573,323,577,338,573,360,545,383,490,403,447,423,407,440,397,462,370,470,356,490,354,497,368,517,376,537,402,545,412],
  bbUp2: [597,175,613,158,623,148,647,143,663,147,677,155,690,167,707,185,727,187,757,197,767,213,785,272,797,292,820,282,840,250,855,212,873,193,887,182,912,169,927,172,947,177,965,185,977,183,990,184,1007,178,1017,180,1032,188,1043,189,1063,183,1077,178],
  bbMid: [37,588,50,588,67,573,77,567,100,553,127,543,143,537,160,537,180,538,207,547,233,557,247,570,263,587,287,600,300,608,320,610,343,610,363,605,383,590,407,570,430,543,453,523,477,500,500,480,530,457,550,433,570,419,587,393,610,355,633,337,653,323,673,307,697,290,717,285,733,288,753,297,777,313,790,318,810,318,830,313,847,303,870,283,893,270,917,257,930,248,953,242,977,240,997,243,1020,249,1043,251,1077,249],
  bbLow: [493,620,500,587,520,543,537,498,547,502,573,543,605,555,630,530,660,470,693,410,703,390,717,383,760,399,770,387,790,330,800,330,833,360,853,380,880,377,917,350,933,327,947,310,958,308,967,297,997,312,1017,315,1043,316,1077,319]
};

// smooth line through the points (Catmull-Rom as cubic beziers)
function curve(a) {
  let d = `M${a[0]} ${a[1]}`;
  for (let i = 0; i + 2 < a.length; i += 2) {
    const x0 = i ? a[i - 2] : a[i], y0 = i ? a[i - 1] : a[i + 1];
    const x1 = a[i], y1 = a[i + 1], x2 = a[i + 2], y2 = a[i + 3];
    const x3 = i + 4 < a.length ? a[i + 4] : x2, y3 = i + 4 < a.length ? a[i + 5] : y2;
    d += `C${(x1 + (x2 - x0) / 6).toFixed(1)} ${(y1 + (y2 - y0) / 6).toFixed(1)} ${(x2 - (x3 - x1) / 6).toFixed(1)} ${(y2 - (y3 - y1) / 6).toFixed(1)} ${x2} ${y2}`;
  }
  return d;
}

function yAt(a, x) {
  for (let i = 0; i + 2 < a.length; i += 2) {
    if (x >= a[i] && x <= a[i + 2]) {
      return a[i + 1] + (a[i + 3] - a[i + 1]) * (x - a[i]) / (a[i + 2] - a[i]);
    }
  }
  return null;
}

// shaded ribbon between two lines, colour depends on which one is on top
function ribbon(a, b, upCol, downCol) {
  let up = "", down = "";
  for (let x = 37; x < 1077; x += 2) {
    const a1 = yAt(a, x), b1 = yAt(b, x), a2 = yAt(a, x + 2), b2 = yAt(b, x + 2);
    if (a1 === null || b1 === null || a2 === null || b2 === null) continue;
    const seg = `M${x} ${a1}L${x + 2} ${a2}L${x + 2} ${b2}L${x} ${b1}Z`;
    if (a1 <= b1) up += seg; else down += seg;
  }
  return `<path d="${up}" fill="${upCol}"/><path d="${down}" fill="${downCol}"/>`;
}

function plus(x, y, c) {
  return `<path d="M${x - 3} ${y}h6M${x} ${y - 3}v6" stroke="${c}" stroke-width="1"/>`;
}

function stroke(k, col, w) {
  return `<path d="${curve(lines[k])}" fill="none" stroke="${col}" stroke-width="${w}"/>`;
}

let s = `<defs><clipPath id="plot"><rect x="37" y="74" width="1166" height="546"/></clipPath></defs>`;
s += `<rect x="37" y="74" width="1208" height="566" fill="#fff"/>`;

// grid
for (let y = 107, i = 0; i < 25; i++, y += 20.58) s += `<path d="M37 ${y}H1203" stroke="#f4f5f7"/>`;
[73, 176, 278, 382, 484, 587, 690, 793, 896, 999, 1101, 1199].forEach(x => { s += `<path d="M${x} 74V620" stroke="#f4f5f7"/>`; });

s += `<g clip-path="url(#plot)">`;
// drawn boxes
s += `<rect x="537" y="211" width="33" height="348" fill="#7c97f5"/>`;
s += `<rect x="673.500" y="328" width="205" height="81" fill="#7c97f5"/>`;
s += `<rect x="785" y="272" width="8.500" height="63" fill="#7c97f5"/>`;
s += `<rect x="785" y="335" width="8.500" height="58" fill="#5a7cf0" stroke="#e8edff" stroke-width="1"/>`;
s += `<rect x="802" y="345" width="43" height="15" fill="#4a70ee" stroke="#c8d4fb" stroke-width="1"/>`;
// ribbons
s += ribbon(lines.red, lines.yellow, "rgba(242,70,90,.27)", "rgba(255,235,80,.3)");
s += ribbon(lines.purple, lines.gray, "rgba(205,90,235,.26)", "rgba(130,130,130,.17)");
// thin bands
["bbUp", "bbUp2", "bbMid", "bbLow"].forEach(k => { s += stroke(k, "#8d94da", .9); });
s += stroke("cyan", "#5cf2ef", 3);
s += stroke("gray", "#bdbdbd", 1.3);
s += stroke("yellow", "#f8e150", 1.5);
s += stroke("purple", "#9a12cc", 1.3);
s += stroke("red", "#c90a20", 1.4);
// candles
candles.forEach((c, n) => {
  const x = 39.7 + 8.565 * n, col = COL[c[0]];
  const wick = c[5] ? "#dcdde0" : (c[0] === "b" ? "#1b9a77" : (c[0] === "o" ? "#333" : col));
  s += `<path d="M${x} ${c[3]}V${c[4]}" stroke="${wick}" stroke-width="1"/>`;
  if (c[2] > c[1]) s += `<rect x="${x - 3}" y="${c[1]}" width="6" height="${c[2] - c[1]}" fill="${col}"/>`;
  if (c[2] - c[1] <= 1) s += `<path d="M${x - 3} ${c[1]}h6" stroke="${col}" stroke-width="1.500"/>`;
});
// signal marks
[[605,108],[596,137],[613,148],[579,206],[588,229],[562,257],[570,261],[553,304],[545,315],[793,272],[802,272],[810,268],[818,253],[827,231],[836,228],[845,202],[853,195],[862,187],[408,386],[398,398],[416,418],[381,444],[390,465],[373,472],[365,546],[356,532]]
  .forEach(p => { s += plus(p[0], p[1], "#f08a2c"); });
[[982,328],[999,318],[990,297]].forEach(p => { s += plus(p[0], p[1], "#35a852"); });
s += `</g>`;

// last price line
s += `<path d="M37 198H1203" stroke="#3a8f78" stroke-width=".8" stroke-dasharray="1 2"/>`;

// axis borders
s += `<path d="M37 620H1245" stroke="#e0e3eb"/>`;

// price scale
const SVG_FONT = `font-family="Liberation Sans" font-size="8.500"`;
[[107,"1.24400"],[128,"1.24300"],[148,"1.24200"],[312,"1.23400"],[333,"1.23300"],[353,"1.23200"],[374,"1.23100"],[395,"1.23000"],[415,"1.22900"],[436,"1.22800"],[457,"1.22700"],[477,"1.22600"],[498,"1.22500"],[519,"1.22400"],[539,"1.22300"],[560,"1.22200"],[580,"1.22100"],[601,"1.22000"]]
  .forEach(p => { s += `<text x="1240" y="${p[0] + 3}" text-anchor="end" ${SVG_FONT} fill="#666">${p[1]}</text>`; });
s += `<text x="1211" y="87" ${SVG_FONT} fill="#666">USD</text><path d="M1226 83h4l-2 2.500z" fill="#666"/>`;

// price tags
[[158,11,"#2f6ce8","1.24052","#fff"],[169,11,"#e8001f","1.24019","#fff"],[180,11,"#e8001f","1.24019","#fff"],[191,12,"#1f9e78","1.23962","#fff"],[203,11.500,"#f0e020","1.23947","#333"],[214.500,11.500,"#f0e020","1.23947","#333"],[226,11.500,"#bb10e8","1.23874","#fff"],[237.500,11.500,"#bb10e8","1.23874","#fff"],[249,11.500,"#b5b5b5","1.23757","#444"],[260.500,11.500,"#b5b5b5","1.23757","#444"],[272,11,"#2f6ce8","1.23710","#fff"],[283,11,"#5ff5f0","1.23577","#1a8a7a"],[314,11,"#2f6ce8","1.23368","#fff"]]
  .forEach(t => {
    s += `<rect x="1204" y="${t[0]}" width="40" height="${t[1]}" fill="${t[2]}"/>`;
    s += `<text x="1224" y="${t[0] + t[1] / 2 + 3}" text-anchor="middle" font-family="Liberation Sans" font-size="8.500" font-weight="${t[4] === "#fff" ? 700 : 400}" fill="${t[4]}">${t[3]}</text>`;
  });

// time scale
[[73,"16"],[176,"12:00"],[278,"17"],[382,"12:00"],[484,"18"],[587,"12:00"],[690,"19"],[793,"12:00"],[896,"20"],[999,"12:00"],[1101,"23"],[1199,"12"]]
  .forEach(p => { s += `<text x="${p[0]}" y="632" text-anchor="middle" ${SVG_FONT} fill="#666">${p[1]}</text>`; });
s += `<circle cx="1225" cy="629" r="3.500" fill="none" stroke="#555"/><path d="M1225 624v1.500M1225 632.500v1.500M1220 629h1.500M1228.500 629h1.500" stroke="#555"/>`;

// flash icon
s += `<circle cx="1076" cy="611" r="5.500" fill="#fff" stroke="#a030c8"/><path d="M1077 607.500l-2.500 4h2l-1 3 2.500-4h-2z" fill="#a030c8"/>`;

// logo
s += `<rect x="41" y="596" width="70" height="18" rx="9" fill="#fff"/>`;
s += `<path d="M46 602h6v7h-3v-4h-3zM56 602h4l-3 7h-3z" fill="#111"/><circle cx="54" cy="603.500" r="1.500" fill="#111"/>`;
s += `<text x="64" y="608" font-family="Liberation Sans" font-size="8" fill="#444">TradingView</text>`;

document.getElementById("chart").innerHTML = s;
</script>
</body>
</html>
